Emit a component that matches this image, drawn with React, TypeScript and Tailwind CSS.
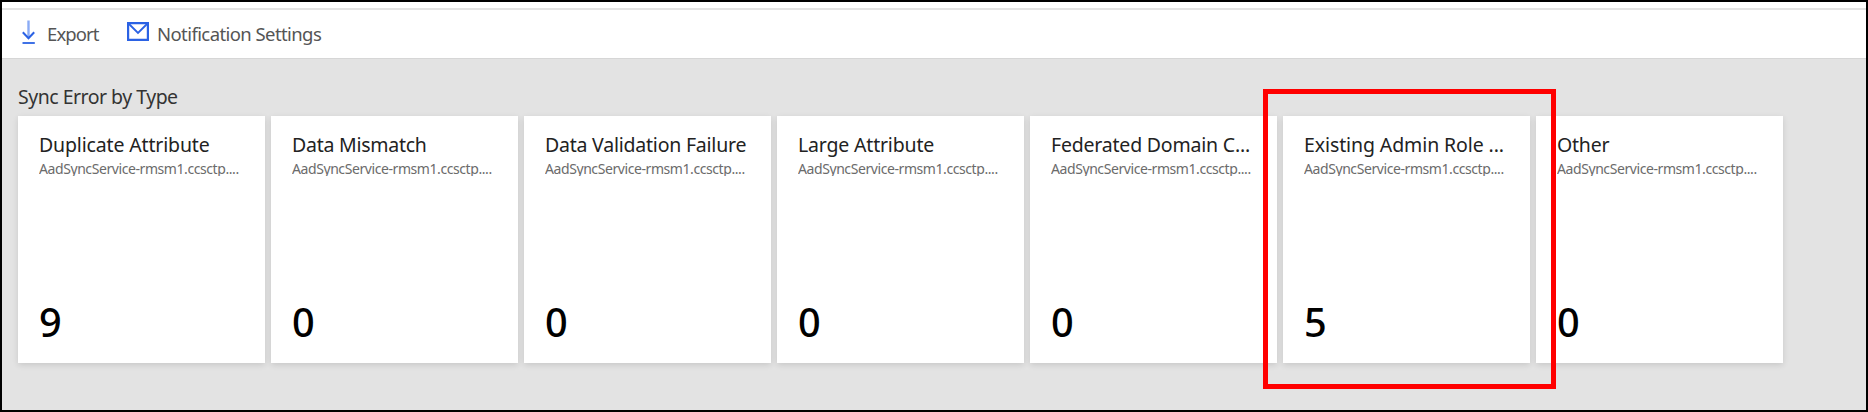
type Tile = { title: string; count: number; spacing: string };

const tiles: Tile[] = [
  { title: "Duplicate Attribute", count: 9, spacing: "tracking-[-0.15px]" },
  { title: "Data Mismatch", count: 0, spacing: "tracking-[-0.25px]" },
  { title: "Data Validation Failure", count: 0, spacing: "tracking-[-0.22px]" },
  { title: "Large Attribute", count: 0, spacing: "tracking-[-0.18px]" },
  { title: "Federated Domain C...", count: 0, spacing: "tracking-[-0.2px]" },
  { title: "Existing Admin Role ...", count: 5, spacing: "tracking-[-0.1px]" },
  { title: "Other", count: 0, spacing: "tracking-[-0.2px]" },
];

function ExportIcon() {
  return (
    <svg width="14" height="24" viewBox="0 0 14 24" fill="none" className="shrink-0">
      <path d="M6.5 .5v17" stroke="#8aabf5" strokeWidth="2.4" />
      <path d="M.8 12.300l5.700 6 5.700-6" stroke="#2b62e4" strokeWidth="2" />
      <path d="M.5 23h12.300" stroke="#2b62e4" strokeWidth="1.8" />
    </svg>
  );
}

function MailIcon() {
  return (
    <svg width="22" height="19" viewBox="0 0 22 19" fill="none" className="shrink-0">
      <path d="M1.1 1.1h19.8v16.8H1.1z" stroke="#2b62e4" strokeWidth="2.2" />
      <path d="M1.500 1.500L11 11l9.500-9.500" stroke="#2b62e4" strokeWidth="1.8" />
    </svg>
  );
}

function TileCard({ title, count, spacing }: Tile) {
  return (
    <article className="flex h-[247px] w-[247px] shrink-0 flex-col bg-white px-[21px] shadow-[0_2px_6px_rgba(0,0,0,0.12)]">
      <h2 className={`mt-[16px] h-[26px] text-[19.500px] leading-[26px] whitespace-nowrap text-[#222222] ${spacing}`}>{title}</h2>
      <p className="mt-[2px] h-[16px] overflow-hidden text-[14px] leading-[18px] tracking-[-0.42px] whitespace-nowrap text-[#6b6b6b]">
        AadSyncService-rmsm1.ccsctp....
      </p>
      <div className="mt-auto mb-[13px] origin-left scale-x-[0.98] text-[40.500px] leading-[56px] font-medium text-black">{count}</div>
    </article>
  );
}

export default function App() {
  return (
    <div className="relative flex h-[412px] w-[1868px] flex-col overflow-hidden border-2 border-black bg-[#e3e3e3] font-['Noto_Sans',sans-serif]">
      <div className="h-[6px] shrink-0 bg-white" />
      <header className="flex h-[51px] shrink-0 items-start border-t-2 border-b border-t-[#e3e3e3] border-b-[#d6d6d6] bg-white pl-[20px] text-[18.500px] text-[#555555]">
        <button className="flex w-[105px] pt-[10px]">
          <ExportIcon />
          <span className="mt-[1px] ml-[11px] leading-[26px] whitespace-nowrap tracking-[-0.9px]">Export</span>
        </button>
        <button className="flex pt-[12px]">
          <MailIcon />
          <span className="mt-[-1px] ml-[8px] leading-[26px] whitespace-nowrap tracking-[-0.58px]">Notification Settings</span>
        </button>
      </header>
      <main className="pl-[16px]">
        <h1 className="mt-[25px] h-[32px] text-[19.500px] leading-[26px] tracking-[-0.5px] text-[#333333]">Sync Error by Type</h1>
        <section className="flex gap-[6px]">
          {tiles.map((t) => (
            <TileCard key={t.title} {...t} />
          ))}
        </section>
      </main>
      <div className="pointer-events-none absolute top-[87px] left-[1261px] h-[300px] w-[293px] border-[5px] border-[#ff0000]" />
    </div>
  );
}
